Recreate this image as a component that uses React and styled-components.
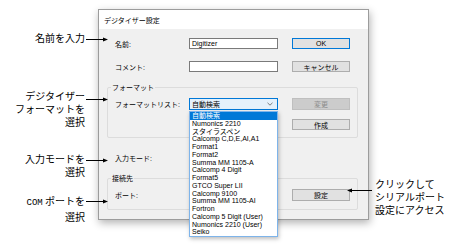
import React from 'react'
import styled, { createGlobalStyle } from 'styled-components'

const GlobalStyle = createGlobalStyle`
  html, body {
    margin: 0;
    padding: 0;
    background: #ffffff;
  }
  body {
    font-family: "Liberation Sans", "Noto Sans CJK JP", sans-serif;
    color: #000;
  }
`

const Stage = styled.div`
  position: relative;
  width: 461px;
  height: 252px;
  overflow: hidden;
  box-sizing: border-box;
  padding: 9px 0 0 98px;
`

const Dialog = styled.div`
  width: 271px;
  box-sizing: border-box;
  border: 1px solid #9c9c9c;
  background: #f0f0f0;
  box-shadow: 1px 3px 8px rgba(0, 0, 0, 0.3);
  display: flex;
  flex-direction: column;
`

const TitleBar = styled.div`
  height: 19px;
  background: #ffffff;
  display: flex;
  align-items: center;
  padding-left: 5px;
  font-size: 7px;
`

const Body = styled.div`
  display: flex;
  flex-direction: column;
  padding: 9px 10px 9px 8px;
`

const Row = styled.div`
  display: flex;
  align-items: center;
  height: ${p => p.$h || 11}px;
  margin-top: ${p => p.$mt || 0}px;
  padding: 0 ${p => (p.$inGroup ? 0 : 8)}px;
  font-size: 7px;
`

const Label = styled.span`
  width: 74px;
  flex: none;
  white-space: nowrap;
`

const Field = styled.div`
  width: 89px;
  height: 100%;
  box-sizing: border-box;
  border: 1px solid #7a7a7a;
  background: #ffffff;
  display: flex;
  align-items: center;
  padding-left: 2px;
  font-size: 7px;
`

const Select = styled(Field)`
  position: relative;
  background: #e5f1fb;
  border-color: #0078d7;
  justify-content: space-between;
  padding-right: 4px;
`

const DropList = styled.ul`
  position: absolute;
  left: -1px;
  top: calc(100% + 2px);
  width: 89px;
  box-sizing: border-box;
  margin: 0;
  padding: 0;
  list-style: none;
  background: #ffffff;
  border: 1px solid #7eb4ea;
  box-shadow: 1px 2px 4px rgba(0, 0, 0, 0.25);
  z-index: 2;
`

const DropItem = styled.li`
  height: 7.75px;
  line-height: 7.75px;
  padding-left: 2px;
  font-size: 7px;
  white-space: nowrap;
  background: ${p => (p.$active ? '#0078d7' : 'transparent')};
  color: ${p => (p.$active ? '#ffffff' : '#000000')};
`

const Button = styled.div`
  width: 58px;
  height: 100%;
  margin-left: auto;
  box-sizing: border-box;
  display: flex;
  align-items: center;
  justify-content: center;
  font-size: 7px;
  background: ${p => (p.$disabled ? '#cccccc' : '#e1e1e1')};
  border: 1px solid ${p => (p.$primary ? '#0078d7' : p.$disabled ? '#bfbfbf' : '#adadad')};
  color: ${p => (p.$disabled ? '#8c8c8c' : '#000000')};
`

const Group = styled.div`
  position: relative;
  margin-top: 15px;
  border: 1px solid #dcdcdc;
  border-radius: 2px;
  padding: 10px 7px ${p => p.$pb || 7}px;
  display: flex;
  flex-direction: column;
`

const Legend = styled.span`
  position: absolute;
  top: -5px;
  left: 3px;
  padding: 0 1px;
  background: #f0f0f0;
  font-size: 7px;
  line-height: 9px;
`

const Callout = styled.div`
  position: absolute;
  top: ${p => p.$top}px;
  left: ${p => (p.$side === 'right' ? '375px' : '0')};
  width: ${p => (p.$side === 'right' ? '86px' : '85px')};
  text-align: ${p => (p.$side === 'right' ? 'left' : 'right')};
  font-family: "Noto Sans CJK JP", sans-serif;
  font-size: 10px;
  line-height: 13px;
  white-space: nowrap;
`

const Latin = styled.span`
  font-family: "Liberation Mono", monospace;
  font-size: 9px;
`

const ArrowSvg = styled.svg`
  position: absolute;
  left: ${p => p.$x}px;
  top: ${p => p.$y - 3}px;
  overflow: visible;
`

const Arrow = ({ x, y, w, left }) => (
  <ArrowSvg $x={x} $y={y} width={w} height="7" viewBox={`0 0 ${w} 7`}>
    {left ? (
      <>
        <line x1="4" y1="3.5" x2={w} y2="3.5" stroke="#000" strokeWidth="1" />
        <polygon points="0,3.5 5,1.5 5,5.5" fill="#000" />
      </>
    ) : (
      <>
        <line x1="0" y1="3.5" x2={w - 4} y2="3.5" stroke="#000" strokeWidth="1" />
        <polygon points={`${w},3.5 ${w - 5},1.5 ${w - 5},5.5`} fill="#000" />
      </>
    )}
  </ArrowSvg>
)

const Chevron = () => (
  <svg width="6" height="4" viewBox="0 0 6 4">
    <polyline points="0.5,0.8 3,3.2 5.5,0.8" fill="none" stroke="#606060" strokeWidth="0.8" />
  </svg>
)

const formats = [
  '自動検索',
  'Numonics 2210',
  'スタイラスペン',
  'Calcomp C,D,E,AI,A1',
  'Format1',
  'Format2',
  'Summa MM 1105-A',
  'Calcomp 4 Digit',
  'Format5',
  'GTCO Super LII',
  'Calcomp 9100',
  'Summa MM 1105-AI',
  'Fortron',
  'Calcomp 5 Digit (User)',
  'Numonics 2210 (User)',
  'Seiko',
]

const App = () => (
  <>
    <GlobalStyle />
    <Stage>
      <Dialog>
        <TitleBar>デジタイザー設定</TitleBar>
        <Body>
          <Row>
            <Label>名前:</Label>
            <Field>Digitizer</Field>
            <Button $primary>OK</Button>
          </Row>
          <Row $mt={12}>
            <Label>コメント:</Label>
            <Field />
            <Button>キャンセル</Button>
          </Row>

          <Group>
            <Legend>フォーマット</Legend>
            <Row $inGroup $h={12}>
              <Label>フォーマットリスト:</Label>
              <Select>
                <span>自動検索</span>
                <Chevron />
                <DropList>
                  {formats.map((f, i) => (
                    <DropItem key={f} $active={i === 0}>{f}</DropItem>
                  ))}
                </DropList>
              </Select>
              <Button $disabled>変更</Button>
            </Row>
            <Row $inGroup $mt={9}>
              <Button>作成</Button>
            </Row>
          </Group>

          <Row $mt={14}>
            <Label>入力モード:</Label>
          </Row>

          <Group $pb={8}>
            <Legend>接続先</Legend>
            <Row $inGroup $h={12}>
              <Label>ポート:</Label>
              <Button>設定</Button>
            </Row>
          </Group>
        </Body>
      </Dialog>

      <Callout $top={30.5}>名前を入力</Callout>
      <Arrow x={86} y={39} w={22} />

      <Callout $top={88.5}>
        デジタイザー<br />フォーマットを<br />選択
      </Callout>
      <Arrow x={86} y={99} w={22} />

      <Callout $top={151.5}>
        入力モードを<br />選択
      </Callout>
      <Arrow x={86} y={160} w={22} />

      <Callout $top={193.5}>
        <Latin>COM</Latin> ポートを<br />選択
      </Callout>
      <Arrow x={86} y={201} w={22} />

      <Callout $side="right" $top={176.5}>
        クリックして<br />シリアルポート<br />設定にアクセス
      </Callout>
      <Arrow x={347} y={190} w={25} left />
    </Stage>
  </>
)

export default App
